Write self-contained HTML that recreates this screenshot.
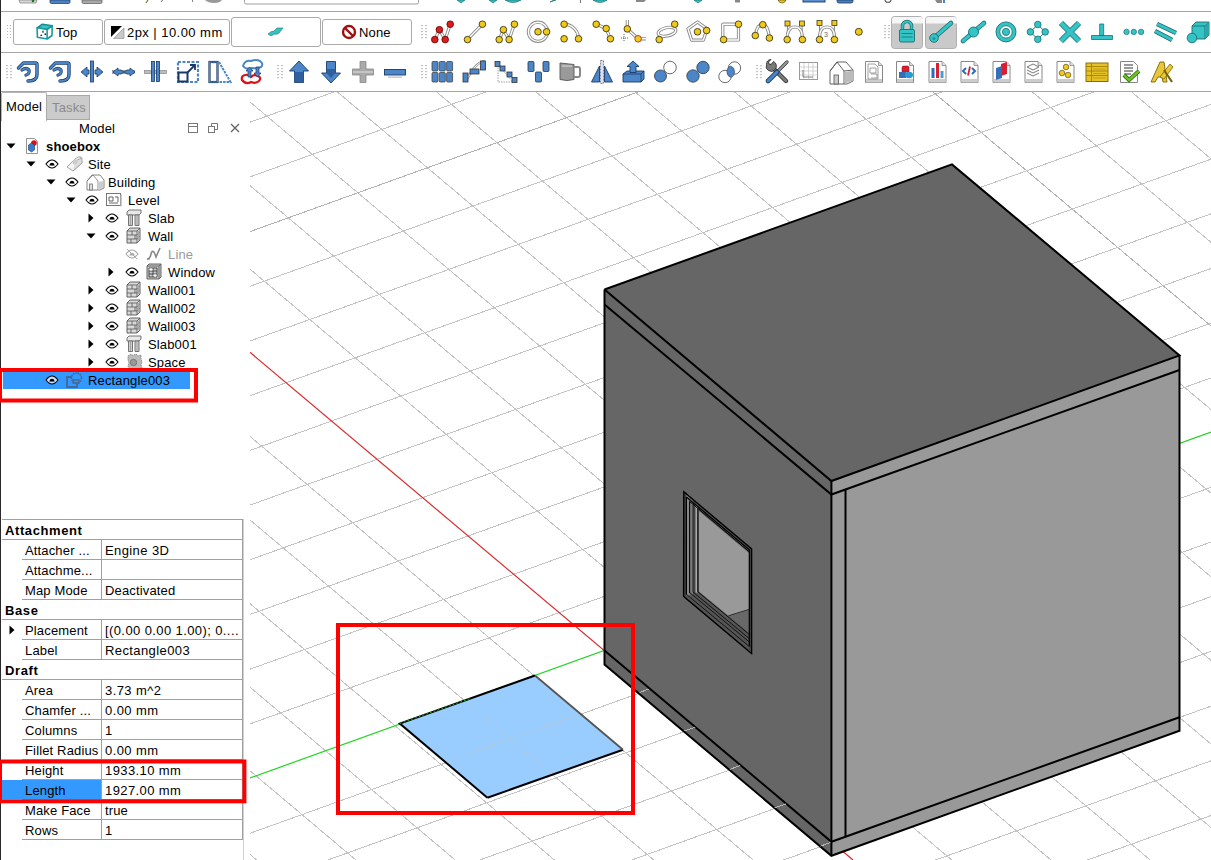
<!DOCTYPE html><html><head><meta charset="utf-8"><style>
html,body{margin:0;padding:0;width:1211px;height:860px;overflow:hidden;background:#fff;}
body{position:relative;font-family:"Liberation Sans",sans-serif;font-size:13px;color:#000;}
.a{position:absolute;}
.sep{position:absolute;left:0;width:1211px;height:1px;background:#a6a6a6;}
.btn{position:absolute;border:1px solid #a9a9a9;border-radius:3px;background:#fff;box-sizing:border-box;}
.t{position:absolute;white-space:nowrap;line-height:15px;letter-spacing:0.15px;}
.grip{position:absolute;width:6px;height:16px;background-image:radial-gradient(circle,#b8b8b8 0.8px,transparent 1px);background-size:3px 3px;}
</style></head><body><div class="sep" style="top:11px"></div><div class="sep" style="top:52px"></div><div class="sep" style="top:91px"></div>
<div class="a" style="left:0;top:0;width:1px;height:860px;background:#2a2a2a"></div>
<div class="grip" style="left:6px;top:24px"></div>
<div class="btn" style="left:13px;top:19px;width:90px;height:26px"></div>
<div class="t" style="left:56px;top:25px">Top</div>
<div class="btn" style="left:104px;top:19px;width:126px;height:26px"></div>
<div class="t" style="left:127px;top:25px;letter-spacing:0.45px">2px | 10.00 mm</div>
<div class="btn" style="left:231px;top:17px;width:90px;height:30px"></div>
<div class="btn" style="left:322px;top:19px;width:90px;height:26px"></div>
<div class="t" style="left:359px;top:25px">None</div>
<div class="a" style="left:1px;top:92px;width:46px;height:29px;border:1px solid #b5b5b5;border-bottom:none;border-radius:2px 2px 0 0;background:#fff;box-sizing:border-box"></div>
<div class="t" style="left:6px;top:99px">Model</div>
<div class="a" style="left:46px;top:95px;width:44px;height:25px;border:1px solid #a9a9a9;background:#cbcbcb;box-sizing:border-box"></div>
<div class="t" style="left:52px;top:100px;color:#8a8a8a">Tasks</div>
<div class="t" style="left:79px;top:121px">Model</div>
<div class="t" style="left:46px;top:139px;color:#000;font-weight:bold">shoebox</div>
<div class="t" style="left:88px;top:157px;color:#000;font-weight:normal">Site</div>
<div class="t" style="left:108px;top:175px;color:#000;font-weight:normal">Building</div>
<div class="t" style="left:128px;top:193px;color:#000;font-weight:normal">Level</div>
<div class="t" style="left:148px;top:211px;color:#000;font-weight:normal">Slab</div>
<div class="t" style="left:148px;top:229px;color:#000;font-weight:normal">Wall</div>
<div class="t" style="left:168px;top:247px;color:#9a9a9a;font-weight:normal">Line</div>
<div class="t" style="left:168px;top:265px;color:#000;font-weight:normal">Window</div>
<div class="t" style="left:148px;top:283px;color:#000;font-weight:normal">Wall001</div>
<div class="t" style="left:148px;top:301px;color:#000;font-weight:normal">Wall002</div>
<div class="t" style="left:148px;top:319px;color:#000;font-weight:normal">Wall003</div>
<div class="t" style="left:148px;top:337px;color:#000;font-weight:normal">Slab001</div>
<div class="t" style="left:148px;top:355px;color:#000;font-weight:normal">Space</div>
<div class="a" style="left:3px;top:372px;width:187px;height:17px;background:#3399ff"></div>
<div class="t" style="left:88px;top:373px;color:#000;font-weight:normal">Rectangle003</div>
<div class="a" style="left:2px;top:519px;width:241px;height:1px;background:#a0a0a0"></div>
<div class="a" style="left:242px;top:519px;width:1px;height:321px;background:#a0a0a0"></div>
<div class="a" style="left:243px;top:519px;width:1px;height:341px;background:#d0d0d0"></div>
<div class="t" style="left:5px;top:523px;font-weight:bold;letter-spacing:0.6px">Attachment</div>
<div class="a" style="left:2px;top:539px;width:240px;height:1px;background:#a0a0a0"></div>
<div class="t" style="left:25px;top:543px">Attacher ...</div>
<div class="t" style="left:105px;top:543px;letter-spacing:0.4px">Engine 3D</div>
<div class="a" style="left:22px;top:559px;width:220px;height:1px;background:#a0a0a0"></div>
<div class="a" style="left:101px;top:540px;width:1px;height:19px;background:#a0a0a0"></div>
<div class="t" style="left:25px;top:563px">Attachme...</div>
<div class="t" style="left:105px;top:563px;letter-spacing:0.15px"></div>
<div class="a" style="left:22px;top:579px;width:220px;height:1px;background:#a0a0a0"></div>
<div class="a" style="left:101px;top:560px;width:1px;height:19px;background:#a0a0a0"></div>
<div class="t" style="left:25px;top:583px">Map Mode</div>
<div class="t" style="left:105px;top:583px;letter-spacing:0.15px">Deactivated</div>
<div class="a" style="left:22px;top:599px;width:220px;height:1px;background:#a0a0a0"></div>
<div class="a" style="left:101px;top:580px;width:1px;height:19px;background:#a0a0a0"></div>
<div class="t" style="left:5px;top:603px;font-weight:bold;letter-spacing:0.6px">Base</div>
<div class="a" style="left:2px;top:619px;width:240px;height:1px;background:#a0a0a0"></div>
<div class="t" style="left:25px;top:623px">Placement</div>
<div class="t" style="left:105px;top:623px;letter-spacing:0.4px">[(0.00 0.00 1.00); 0....</div>
<div class="a" style="left:22px;top:639px;width:220px;height:1px;background:#a0a0a0"></div>
<div class="a" style="left:101px;top:620px;width:1px;height:19px;background:#a0a0a0"></div>
<div class="t" style="left:25px;top:643px">Label</div>
<div class="t" style="left:105px;top:643px;letter-spacing:0.4px">Rectangle003</div>
<div class="a" style="left:22px;top:659px;width:220px;height:1px;background:#a0a0a0"></div>
<div class="a" style="left:101px;top:640px;width:1px;height:19px;background:#a0a0a0"></div>
<div class="t" style="left:5px;top:663px;font-weight:bold;letter-spacing:0.6px">Draft</div>
<div class="a" style="left:2px;top:679px;width:240px;height:1px;background:#a0a0a0"></div>
<div class="t" style="left:25px;top:683px">Area</div>
<div class="t" style="left:105px;top:683px;letter-spacing:0.4px">3.73 m^2</div>
<div class="a" style="left:22px;top:699px;width:220px;height:1px;background:#a0a0a0"></div>
<div class="a" style="left:101px;top:680px;width:1px;height:19px;background:#a0a0a0"></div>
<div class="t" style="left:25px;top:703px">Chamfer ...</div>
<div class="t" style="left:105px;top:703px;letter-spacing:0.4px">0.00 mm</div>
<div class="a" style="left:22px;top:719px;width:220px;height:1px;background:#a0a0a0"></div>
<div class="a" style="left:101px;top:700px;width:1px;height:19px;background:#a0a0a0"></div>
<div class="t" style="left:25px;top:723px">Columns</div>
<div class="t" style="left:105px;top:723px;letter-spacing:0.4px">1</div>
<div class="a" style="left:22px;top:739px;width:220px;height:1px;background:#a0a0a0"></div>
<div class="a" style="left:101px;top:720px;width:1px;height:19px;background:#a0a0a0"></div>
<div class="t" style="left:25px;top:743px">Fillet Radius</div>
<div class="t" style="left:105px;top:743px;letter-spacing:0.4px">0.00 mm</div>
<div class="a" style="left:22px;top:759px;width:220px;height:1px;background:#a0a0a0"></div>
<div class="a" style="left:101px;top:740px;width:1px;height:19px;background:#a0a0a0"></div>
<div class="t" style="left:25px;top:763px">Height</div>
<div class="t" style="left:105px;top:763px;letter-spacing:0.4px">1933.10 mm</div>
<div class="a" style="left:22px;top:779px;width:220px;height:1px;background:#a0a0a0"></div>
<div class="a" style="left:101px;top:760px;width:1px;height:19px;background:#a0a0a0"></div>
<div class="a" style="left:2px;top:780px;width:99px;height:19px;background:#3399ff"></div>
<div class="t" style="left:25px;top:783px">Length</div>
<div class="t" style="left:105px;top:783px;letter-spacing:0.4px">1927.00 mm</div>
<div class="a" style="left:22px;top:799px;width:220px;height:1px;background:#a0a0a0"></div>
<div class="a" style="left:101px;top:780px;width:1px;height:19px;background:#a0a0a0"></div>
<div class="t" style="left:25px;top:803px">Make Face</div>
<div class="t" style="left:105px;top:803px;letter-spacing:0.15px">true</div>
<div class="a" style="left:22px;top:819px;width:220px;height:1px;background:#a0a0a0"></div>
<div class="a" style="left:101px;top:800px;width:1px;height:19px;background:#a0a0a0"></div>
<div class="t" style="left:25px;top:823px">Rows</div>
<div class="t" style="left:105px;top:823px;letter-spacing:0.4px">1</div>
<div class="a" style="left:22px;top:839px;width:220px;height:1px;background:#a0a0a0"></div>
<div class="a" style="left:101px;top:820px;width:1px;height:19px;background:#a0a0a0"></div>
<svg class="a" style="left:0;top:0" width="1211" height="92" viewBox="0 0 1211 92"><path d="M19,0 h18 l-1,3 h-16 z" fill="#d8d8d8" stroke="#888" stroke-width="0.8"/><circle cx="33" cy="1" r="1.3" fill="#1a7a1a"/><path d="M50,0 h20 v2 a1.5,1.5 0 0 1 -1.5,1.5 h-17 a1.5,1.5 0 0 1 -1.5,-1.5 z" fill="#4a7fc0" stroke="#24477a" stroke-width="0.8"/><path d="M82,0 h20 v2 a1.5,1.5 0 0 1 -1.5,1.5 h-17 a1.5,1.5 0 0 1 -1.5,-1.5 z" fill="#a8a8a8" stroke="#666" stroke-width="0.8"/><path d="M146,3 l2,-3" stroke="#7a7a20" stroke-width="1.2"/><path d="M161,2 q1,-2 2,-2" stroke="#777" stroke-width="1"/><rect x="192" y="0" width="1" height="2" fill="#888"/><path d="M205,0 h17 q-2,3 -8,3 q-6,0 -9,-3z" fill="#999"/><path d="M244.5,0 v2.5 a1.5,1.5 0 0 0 1.5,1.5 h171 a1.5,1.5 0 0 0 1.5,-1.5 v-2.5" fill="none" stroke="#a0a0a0" stroke-width="1"/><path d="M457,0 l4,3 l4,-3z" fill="#35c4c6" stroke="#1b6e70" stroke-width="0.7"/><path d="M489,0 l4,3 l4,-3z" fill="#35c4c6" stroke="#1b6e70" stroke-width="0.7"/><path d="M694,0 l4,3 l4,-3z" fill="#35c4c6" stroke="#1b6e70" stroke-width="0.7"/><path d="M505,0 h16 q-8,5 -16,0z" fill="#35c4c6" stroke="#1b6e70" stroke-width="0.7"/><path d="M593,0 h14 q-7,5 -14,0z" fill="#35c4c6" stroke="#1b6e70" stroke-width="0.7"/><path d="M550,2 l4,-2 h2 z" fill="#35c4c6" stroke="#1b6e70" stroke-width="0.7"/><rect x="580" y="0" width="1" height="3" fill="#777"/><path d="M636,0 h10 l-2,2 h-8z" fill="#888"/><rect x="735" y="0" width="5" height="2.5" fill="#888"/><path d="M778,0 h8 q-1,3 -4,3 q-3,0 -4,-3z" fill="#f2c81a" stroke="#3d3a10" stroke-width="0.6"/><rect x="803" y="-2" width="22" height="4" fill="#5b8fd0" stroke="#1a3a66" stroke-width="0.9"/><path d="M837,0 h16 v1 q0,2 -2,2 h-12 q-2,0 -2,-2z" fill="#4a7fc0" stroke="#1a3a66" stroke-width="0.8"/><path d="M885,0 q1,3 3,2 q2,1 3,-2" stroke="#555" fill="none" stroke-width="1.2"/><path d="M935,0 h7 v3 h-5z" fill="#888"/><rect x="943" y="0" width="2" height="3" fill="#4a7fc0"/><rect x="421" y="25" width="2" height="1.2" fill="#c4c4c4"/><rect x="425" y="25" width="2" height="1.2" fill="#c4c4c4"/><rect x="421" y="28" width="2" height="1.2" fill="#c4c4c4"/><rect x="425" y="28" width="2" height="1.2" fill="#c4c4c4"/><rect x="421" y="31" width="2" height="1.2" fill="#c4c4c4"/><rect x="425" y="31" width="2" height="1.2" fill="#c4c4c4"/><rect x="421" y="34" width="2" height="1.2" fill="#c4c4c4"/><rect x="425" y="34" width="2" height="1.2" fill="#c4c4c4"/><rect x="421" y="37" width="2" height="1.2" fill="#c4c4c4"/><rect x="425" y="37" width="2" height="1.2" fill="#c4c4c4"/><path d="M434.8,39.6 L439.4,29.7 L445.2,39.6 L450.2,24.2" fill="none" stroke="#8a8a8a" stroke-width="3.2" stroke-linejoin="round"/><path d="M434.8,39.6 L439.4,29.7 L445.2,39.6 L450.2,24.2" fill="none" stroke="#fff" stroke-width="1.4" stroke-linejoin="round"/><circle cx="434.8" cy="39.6" r="3.3" fill="#d81e1e" stroke="#700" stroke-width="0.9"/><circle cx="439.4" cy="29.7" r="3.3" fill="#d81e1e" stroke="#700" stroke-width="0.9"/><circle cx="445.2" cy="39.6" r="3.3" fill="#d81e1e" stroke="#700" stroke-width="0.9"/><circle cx="450.2" cy="24.2" r="3.3" fill="#d81e1e" stroke="#700" stroke-width="0.9"/><path d="M467.5,39.6 L482.4,24.2" fill="none" stroke="#8a8a8a" stroke-width="3.2" stroke-linejoin="round"/><path d="M467.5,39.6 L482.4,24.2" fill="none" stroke="#fff" stroke-width="1.4" stroke-linejoin="round"/><circle cx="467.5" cy="39.6" r="3.3" fill="#f2c81a" stroke="#3d3a10" stroke-width="0.9"/><circle cx="482.4" cy="24.2" r="3.3" fill="#f2c81a" stroke="#3d3a10" stroke-width="0.9"/><path d="M499.2,39.6 L503.4,29.7 L509.1,39.6 L514.4,24.2" fill="none" stroke="#8a8a8a" stroke-width="3.2" stroke-linejoin="round"/><path d="M499.2,39.6 L503.4,29.7 L509.1,39.6 L514.4,24.2" fill="none" stroke="#fff" stroke-width="1.4" stroke-linejoin="round"/><circle cx="499.2" cy="39.6" r="3.3" fill="#f2c81a" stroke="#3d3a10" stroke-width="0.9"/><circle cx="503.4" cy="29.7" r="3.3" fill="#f2c81a" stroke="#3d3a10" stroke-width="0.9"/><circle cx="509.1" cy="39.6" r="3.3" fill="#f2c81a" stroke="#3d3a10" stroke-width="0.9"/><circle cx="514.4" cy="24.2" r="3.3" fill="#f2c81a" stroke="#3d3a10" stroke-width="0.9"/><circle cx="538" cy="31.8" r="9.6" fill="none" stroke="#8a8a8a" stroke-width="3.2"/><circle cx="538" cy="31.8" r="9.6" fill="none" stroke="#fff" stroke-width="1.4"/><circle cx="538" cy="31.8" r="3.3" fill="#f2c81a" stroke="#3d3a10" stroke-width="0.9"/><circle cx="546.6" cy="31.8" r="3.3" fill="#f2c81a" stroke="#3d3a10" stroke-width="0.9"/><path d="M564.1,24.2 A14.5,14.5 0 0 1 578.5,38.8" fill="none" stroke="#8a8a8a" stroke-width="3.2" stroke-linejoin="round"/><path d="M564.1,24.2 A14.5,14.5 0 0 1 578.5,38.8" fill="none" stroke="#fff" stroke-width="1.4" stroke-linejoin="round"/><circle cx="564.1" cy="24.2" r="3.3" fill="#f2c81a" stroke="#3d3a10" stroke-width="0.9"/><circle cx="564.1" cy="38.8" r="3.3" fill="#f2c81a" stroke="#3d3a10" stroke-width="0.9"/><circle cx="578.5" cy="38.8" r="3.3" fill="#f2c81a" stroke="#3d3a10" stroke-width="0.9"/><path d="M596.2,24.2 L606.2,28.5 L610.4,38.8" fill="none" stroke="#8a8a8a" stroke-width="3.2" stroke-linejoin="round"/><path d="M596.2,24.2 L606.2,28.5 L610.4,38.8" fill="none" stroke="#fff" stroke-width="1.4" stroke-linejoin="round"/><circle cx="596.2" cy="24.2" r="3.3" fill="#f2c81a" stroke="#3d3a10" stroke-width="0.9"/><circle cx="606.2" cy="28.5" r="3.3" fill="#f2c81a" stroke="#3d3a10" stroke-width="0.9"/><circle cx="610.4" cy="38.8" r="3.3" fill="#f2c81a" stroke="#3d3a10" stroke-width="0.9"/><path d="M627.3,20 L627.3,28.9 L638.1,38.8 L646,38.8" fill="none" stroke="#8a8a8a" stroke-width="3.2" stroke-linejoin="round"/><path d="M627.3,20 L627.3,28.9 L638.1,38.8 L646,38.8" fill="none" stroke="#fff" stroke-width="1.4" stroke-linejoin="round"/><path d="M624,34 v8 M621,38 h7" stroke="#333" stroke-width="0.8" stroke-dasharray="1,1"/><circle cx="627.3" cy="28.9" r="3.3" fill="#f2c81a" stroke="#3d3a10" stroke-width="0.9"/><circle cx="638.1" cy="38.8" r="3.3" fill="#f2c81a" stroke="#a33" stroke-width="0.9"/><ellipse cx="667" cy="31.8" rx="9" ry="4.2" transform="rotate(-12 667 31.8)" fill="none" stroke="#8a8a8a" stroke-width="3.2"/><ellipse cx="667" cy="31.8" rx="9" ry="4.2" transform="rotate(-12 667 31.8)" fill="none" stroke="#fff" stroke-width="1.4"/><circle cx="659.2" cy="39.6" r="3.3" fill="#f2c81a" stroke="#3d3a10" stroke-width="0.9"/><circle cx="674.7" cy="24.2" r="3.3" fill="#f2c81a" stroke="#3d3a10" stroke-width="0.9"/><path d="M697.5,22.0 L707.0,28.9 L703.4,40.1 L691.6,40.1 L688.0,28.9 Z" fill="none" stroke="#8a8a8a" stroke-width="3.2" stroke-linejoin="round"/><path d="M697.5,22.0 L707.0,28.9 L703.4,40.1 L691.6,40.1 L688.0,28.9 Z" fill="none" stroke="#fff" stroke-width="1.4" stroke-linejoin="round"/><circle cx="697.5" cy="31.8" r="3.3" fill="#f2c81a" stroke="#3d3a10" stroke-width="0.9"/><circle cx="706.6" cy="30.5" r="3.3" fill="#f2c81a" stroke="#3d3a10" stroke-width="0.9"/><path d="M722.8,24.2 H738.5 V40 H722.8 Z" fill="none" stroke="#8a8a8a" stroke-width="3.2" stroke-linejoin="round"/><path d="M722.8,24.2 H738.5 V40 H722.8 Z" fill="none" stroke="#fff" stroke-width="1.4" stroke-linejoin="round"/><circle cx="738.5" cy="24.2" r="3.3" fill="#f2c81a" stroke="#3d3a10" stroke-width="0.9"/><circle cx="723.6" cy="39.6" r="3.3" fill="#f2c81a" stroke="#3d3a10" stroke-width="0.9"/><path d="M755.3,35.5 Q757,24 762.8,24.7 Q768,25 769.4,38" fill="none" stroke="#8a8a8a" stroke-width="3.2" stroke-linejoin="round"/><path d="M755.3,35.5 Q757,24 762.8,24.7 Q768,25 769.4,38" fill="none" stroke="#fff" stroke-width="1.4" stroke-linejoin="round"/><circle cx="762.8" cy="24.7" r="3.3" fill="#f2c81a" stroke="#3d3a10" stroke-width="0.9"/><circle cx="755.3" cy="35.5" r="3.3" fill="#f2c81a" stroke="#3d3a10" stroke-width="0.9"/><circle cx="769.4" cy="38" r="3.3" fill="#f2c81a" stroke="#3d3a10" stroke-width="0.9"/><path d="M787.5,23.6 L787.2,39.6 M802,23.6 L802.4,39.6" stroke="#888" stroke-width="1"/><path d="M787.2,39.6 Q787,27 795,27 Q802.5,27 802.4,39.6" fill="none" stroke="#8a8a8a" stroke-width="3.2" stroke-linejoin="round"/><path d="M787.2,39.6 Q787,27 795,27 Q802.5,27 802.4,39.6" fill="none" stroke="#fff" stroke-width="1.4" stroke-linejoin="round"/><rect x="785.0" y="21" width="5" height="5" fill="#f2c81a" stroke="#3d3a10" stroke-width="0.8"/><rect x="799.5" y="21" width="5" height="5" fill="#f2c81a" stroke="#3d3a10" stroke-width="0.8"/><circle cx="787.2" cy="39.6" r="3.3" fill="#f2c81a" stroke="#3d3a10" stroke-width="0.9"/><circle cx="802.4" cy="39.6" r="3.3" fill="#f2c81a" stroke="#3d3a10" stroke-width="0.9"/><path d="M819.5,23.1 L819.5,39.6 M834.4,23.1 L834.4,39.6" stroke="#888" stroke-width="1"/><path d="M819.5,39.6 Q819,27 827,27 Q835,27 834.4,39.6" fill="none" stroke="#8a8a8a" stroke-width="3.2" stroke-linejoin="round"/><path d="M819.5,39.6 Q819,27 827,27 Q835,27 834.4,39.6" fill="none" stroke="#fff" stroke-width="1.4" stroke-linejoin="round"/><text x="824" y="37" font-size="7" fill="#666" font-family="Liberation Sans">3</text><rect x="817.0" y="20.5" width="5" height="5" fill="#f2c81a" stroke="#3d3a10" stroke-width="0.8"/><rect x="831.9" y="20.5" width="5" height="5" fill="#f2c81a" stroke="#3d3a10" stroke-width="0.8"/><circle cx="819.5" cy="39.6" r="3.3" fill="#f2c81a" stroke="#3d3a10" stroke-width="0.9"/><circle cx="834.4" cy="39.6" r="3.3" fill="#f2c81a" stroke="#3d3a10" stroke-width="0.9"/><circle cx="858.8" cy="31.8" r="3.5" fill="#f2c81a" stroke="#3d3a10" stroke-width="0.9"/><rect x="884" y="25" width="2" height="1.2" fill="#c4c4c4"/><rect x="888" y="25" width="2" height="1.2" fill="#c4c4c4"/><rect x="884" y="28" width="2" height="1.2" fill="#c4c4c4"/><rect x="888" y="28" width="2" height="1.2" fill="#c4c4c4"/><rect x="884" y="31" width="2" height="1.2" fill="#c4c4c4"/><rect x="888" y="31" width="2" height="1.2" fill="#c4c4c4"/><rect x="884" y="34" width="2" height="1.2" fill="#c4c4c4"/><rect x="888" y="34" width="2" height="1.2" fill="#c4c4c4"/><rect x="884" y="37" width="2" height="1.2" fill="#c4c4c4"/><rect x="888" y="37" width="2" height="1.2" fill="#c4c4c4"/><rect x="891.5" y="16.5" width="31" height="32" rx="3" fill="#c9c9c9" stroke="#b0b0b0" stroke-width="1"/><path d="M892,23.5 V19.5 a2.5,2.5 0 0 1 2.5,-2.5 h26 a2.5,2.5 0 0 1 2.5,2.5 V23.5 Z" fill="#f6f6f6"/><rect x="925.5" y="16.5" width="31" height="32" rx="3" fill="#c9c9c9" stroke="#b0b0b0" stroke-width="1"/><path d="M926,23.5 V19.5 a2.5,2.5 0 0 1 2.5,-2.5 h26 a2.5,2.5 0 0 1 2.5,2.5 V23.5 Z" fill="#f6f6f6"/><path d="M902.5,30 v-4 a4.5,4.5 0 0 1 9,0 v4" fill="none" stroke="#1b6e70" stroke-width="3.4"/><path d="M902.5,30 v-4 a4.5,4.5 0 0 1 9,0 v4" fill="none" stroke="#35c4c6" stroke-width="2"/><rect x="899.5" y="29.5" width="15" height="12.5" rx="1.5" fill="#35c4c6" stroke="#1b6e70" stroke-width="0.9"/><path d="M901.5,33.5 h11 M901.5,37 h11" stroke="#1b6e70" stroke-width="0.8"/><path d="M935,37 L951,23" stroke="#1b6e70" stroke-width="4.6" stroke-linecap="round"/><path d="M935,37 L951,23" stroke="#35c4c6" stroke-width="3" stroke-linecap="round"/><circle cx="934" cy="38" r="4.3" fill="#35c4c6" stroke="#1b6e70" stroke-width="0.9"/><circle cx="934" cy="38.5" r="1.6" fill="#1f9a9c"/><path d="M963,41 L984,23" stroke="#1b6e70" stroke-width="4.6" stroke-linecap="round"/><path d="M963,41 L984,23" stroke="#35c4c6" stroke-width="3" stroke-linecap="round"/><circle cx="973.5" cy="32" r="5" fill="#35c4c6" stroke="#1b6e70" stroke-width="0.9"/><circle cx="1006" cy="31.9" r="10" fill="#35c4c6" stroke="#1b6e70" stroke-width="0.9"/><circle cx="1006" cy="31.9" r="6.2" fill="#fff" stroke="#1b6e70" stroke-width="0.8"/><circle cx="1006" cy="31.9" r="3.6" fill="#35c4c6" stroke="#1b6e70" stroke-width="0.8"/><path d="M1037.8,24.5 L1045.2,31.9 L1037.8,39.3 L1030.4,31.9Z" fill="none" stroke="#1b6e70" stroke-width="1"/><circle cx="1037.8" cy="24.5" r="3.3" fill="#35c4c6" stroke="#1b6e70" stroke-width="0.8"/><circle cx="1045.2" cy="31.9" r="3.3" fill="#35c4c6" stroke="#1b6e70" stroke-width="0.8"/><circle cx="1037.8" cy="39.3" r="3.3" fill="#35c4c6" stroke="#1b6e70" stroke-width="0.8"/><circle cx="1030.3999999999999" cy="31.9" r="3.3" fill="#35c4c6" stroke="#1b6e70" stroke-width="0.8"/><path d="M1061,23 L1079,41 M1079,23 L1061,41" stroke="#1b6e70" stroke-width="6"/><path d="M1061,23 L1079,41 M1079,23 L1061,41" stroke="#35c4c6" stroke-width="4.4"/><path d="M1091.5,35.5 h21 v4 h-21z M1099.7,24 h4 v11.5 h-4z" fill="#35c4c6" stroke="#1b6e70" stroke-width="0.8"/><circle cx="1126.5" cy="31.9" r="2.7" fill="#35c4c6" stroke="#1b6e70" stroke-width="0.7"/><circle cx="1133.8" cy="31.9" r="2.7" fill="#35c4c6" stroke="#1b6e70" stroke-width="0.7"/><circle cx="1141.1" cy="31.9" r="2.7" fill="#35c4c6" stroke="#1b6e70" stroke-width="0.7"/><path d="M1157,24 L1176,33 M1155,31 L1172,40" stroke="#1b6e70" stroke-width="4.5"/><path d="M1157,24 L1176,33 M1155,31 L1172,40" stroke="#35c4c6" stroke-width="3"/><path d="M1192,26 l4,-4 h13 v13 l-4,4 h-13z" fill="#35c4c6" stroke="#1b6e70" stroke-width="0.9"/><path d="M1192,26 h13 v13 M1205,26 l4,-4" fill="none" stroke="#1b6e70" stroke-width="0.9"/><path d="M1205,26 l4,-4 v13 l-4,4z" fill="#2aa7a9"/><circle cx="1192" cy="38" r="4.8" fill="#35c4c6" stroke="#1b6e70" stroke-width="0.9"/><rect x="6" y="65" width="2" height="1.2" fill="#c4c4c4"/><rect x="10" y="65" width="2" height="1.2" fill="#c4c4c4"/><rect x="6" y="68" width="2" height="1.2" fill="#c4c4c4"/><rect x="10" y="68" width="2" height="1.2" fill="#c4c4c4"/><rect x="6" y="71" width="2" height="1.2" fill="#c4c4c4"/><rect x="10" y="71" width="2" height="1.2" fill="#c4c4c4"/><rect x="6" y="74" width="2" height="1.2" fill="#c4c4c4"/><rect x="10" y="74" width="2" height="1.2" fill="#c4c4c4"/><rect x="6" y="77" width="2" height="1.2" fill="#c4c4c4"/><rect x="10" y="77" width="2" height="1.2" fill="#c4c4c4"/><path d="M18.5,68 L23.5,63 H35.5 Q37,63 37,64.5 V74.5 Q37,81 28,81" fill="none" stroke="#1a3a66" stroke-width="3.4" stroke-linecap="round" stroke-linejoin="round"/><path d="M18.5,68 L23.5,63 H35.5 Q37,63 37,64.5 V74.5 Q37,81 28,81" fill="none" stroke="#4a86c8" stroke-width="2" stroke-linecap="round" stroke-linejoin="round"/><path d="M22,70 Q26,67 29,70 Q30,74 26,75" fill="none" stroke="#1a3a66" stroke-width="3.2" stroke-linecap="round"/><path d="M22,70 Q26,67 29,70 Q30,74 26,75" fill="none" stroke="#4a86c8" stroke-width="1.8" stroke-linecap="round"/><path d="M50.5,68 L55.5,63 H67.5 Q69,63 69,64.5 V74.5 Q69,81 60,81" fill="none" stroke="#1a3a66" stroke-width="3.4" stroke-linecap="round" stroke-linejoin="round"/><path d="M50.5,68 L55.5,63 H67.5 Q69,63 69,64.5 V74.5 Q69,81 60,81" fill="none" stroke="#4a86c8" stroke-width="2" stroke-linecap="round" stroke-linejoin="round"/><path d="M54,70 Q58,67 61,70 Q62,74 58,75" fill="none" stroke="#1a3a66" stroke-width="3.2" stroke-linecap="round"/><path d="M54,70 Q58,67 61,70 Q62,74 58,75" fill="none" stroke="#4a86c8" stroke-width="1.8" stroke-linecap="round"/><rect x="90.5" y="61" width="3" height="21" fill="#4a86c8" stroke="#1a3a66" stroke-width="0.8"/><path d="M81,72 l6,-5 v3 h2 v4 h-2 v3z M103,72 l-6,-5 v3 h-2 v4 h2 v3z" fill="#4a86c8" stroke="#1a3a66" stroke-width="0.8"/><rect x="112.5" y="70.5" width="22" height="3" fill="#bbb" stroke="#888" stroke-width="0.7"/><path d="M113,72 l5,-4 v2 h3 l3,2 l-3,2 h-3 v2z M135,72 l-5,-4 v2 h-3 l-3,2 l3,2 h3 v2z" fill="#4a86c8" stroke="#1a3a66" stroke-width="0.8"/><rect x="144.5" y="70.5" width="22" height="3" fill="#bbb" stroke="#888" stroke-width="0.7"/><rect x="151.5" y="61.5" width="3" height="20" fill="#4a86c8" stroke="#1a3a66" stroke-width="0.8"/><rect x="156.5" y="61.5" width="3" height="20" fill="#4a86c8" stroke="#1a3a66" stroke-width="0.8"/><rect x="178" y="62" width="20" height="20" fill="none" stroke="#4a86c8" stroke-width="2.2" stroke-dasharray="3,1.5"/><rect x="178.5" y="72.5" width="9" height="9" fill="#fff" stroke="#1a3a66" stroke-width="2"/><path d="M187,73 L195,65 M190,65 h5 v5" fill="none" stroke="#1a3a66" stroke-width="1.8"/><rect x="209.5" y="62" width="8" height="20" fill="#fff" stroke="#1a3a66" stroke-width="2.2"/><rect x="209.5" y="62" width="8" height="20" fill="none" stroke="#4a86c8" stroke-width="1"/><path d="M219,62 L230.5,82 H219" fill="none" stroke="#4a86c8" stroke-width="2" stroke-dasharray="2.5,1"/><path d="M242,80 q-1,-4 3,-5 q4,-1 6,2 q3,-3 7,-1 q4,2 1,5 q-3,3 -8,1 q-5,3 -9,-2z" fill="none" stroke="#d11" stroke-width="2.2"/><path d="M243,66 q2,-6 8,-5 q5,-2 9,0 q4,3 1,6 q-4,2 -9,1 q-6,2 -9,-2z" fill="none" stroke="#4a86c8" stroke-width="2"/><path d="M248,77 v-6 h-2 l3.5,-4 l3.5,4 h-2 v6z M256,67 v6 h-2 l3.5,4 l3.5,-4 h-2 v-6z" fill="#4a86c8" stroke="#1a3a66" stroke-width="0.7"/><rect x="277" y="65" width="2" height="1.2" fill="#c4c4c4"/><rect x="281" y="65" width="2" height="1.2" fill="#c4c4c4"/><rect x="277" y="68" width="2" height="1.2" fill="#c4c4c4"/><rect x="281" y="68" width="2" height="1.2" fill="#c4c4c4"/><rect x="277" y="71" width="2" height="1.2" fill="#c4c4c4"/><rect x="281" y="71" width="2" height="1.2" fill="#c4c4c4"/><rect x="277" y="74" width="2" height="1.2" fill="#c4c4c4"/><rect x="281" y="74" width="2" height="1.2" fill="#c4c4c4"/><rect x="277" y="77" width="2" height="1.2" fill="#c4c4c4"/><rect x="281" y="77" width="2" height="1.2" fill="#c4c4c4"/><path d="M299,61 l9.5,10 h-5 v11.5 h-9 v-11.5 h-5z" fill="#4a86c8" stroke="#1a3a66" stroke-width="0.9"/><path d="M294.5,72 h9 v10.5 h-9z" fill="#2f5f9e"/><path d="M331,83 l9.5,-10 h-5 v-11.5 h-9 v11.5 h-5z" fill="#4a86c8" stroke="#1a3a66" stroke-width="0.9"/><path d="M326.5,69 h9 v4 l-4.5,5 l-4.5,-5z" fill="#2f5f9e"/><path d="M360,61.5 h6 v7.5 h7.5 v6 h-7.5 v7.5 h-6 v-7.5 h-7.5 v-6 h7.5z" fill="#aaa" stroke="#888" stroke-width="0.8"/><path d="M353,72 h20" stroke="#ddd" stroke-width="1"/><rect x="384.5" y="69.5" width="21" height="5.5" fill="#4a86c8" stroke="#1a3a66" stroke-width="0.9"/><rect x="388" y="76.5" width="14" height="1.2" fill="#bbb"/><rect x="421" y="65" width="2" height="1.2" fill="#c4c4c4"/><rect x="425" y="65" width="2" height="1.2" fill="#c4c4c4"/><rect x="421" y="68" width="2" height="1.2" fill="#c4c4c4"/><rect x="425" y="68" width="2" height="1.2" fill="#c4c4c4"/><rect x="421" y="71" width="2" height="1.2" fill="#c4c4c4"/><rect x="425" y="71" width="2" height="1.2" fill="#c4c4c4"/><rect x="421" y="74" width="2" height="1.2" fill="#c4c4c4"/><rect x="425" y="74" width="2" height="1.2" fill="#c4c4c4"/><rect x="421" y="77" width="2" height="1.2" fill="#c4c4c4"/><rect x="425" y="77" width="2" height="1.2" fill="#c4c4c4"/><rect x="432.0" y="61.5" width="6" height="9.5" rx="1" fill="#4a86c8" stroke="#444" stroke-width="0.8"/><rect x="432.0" y="72.5" width="6" height="9.5" rx="1" fill="#4a86c8" stroke="#444" stroke-width="0.8"/><rect x="439.3" y="61.5" width="6" height="9.5" rx="1" fill="#4a86c8" stroke="#444" stroke-width="0.8"/><rect x="439.3" y="72.5" width="6" height="9.5" rx="1" fill="#4a86c8" stroke="#444" stroke-width="0.8"/><rect x="446.6" y="61.5" width="6" height="9.5" rx="1" fill="#4a86c8" stroke="#444" stroke-width="0.8"/><rect x="446.6" y="72.5" width="6" height="9.5" rx="1" fill="#4a86c8" stroke="#444" stroke-width="0.8"/><path d="M467,79 q6,-10 8,-12 q4,-5 10,-6" fill="none" stroke="#999" stroke-width="2.5"/><path d="M467,79 q6,-10 8,-12 q4,-5 10,-6" fill="none" stroke="#fff" stroke-width="1"/><rect x="463" y="73" width="5" height="9" fill="#4a86c8" stroke="#333" stroke-width="0.8"/><rect x="470" y="69" width="9" height="5" fill="#4a86c8" stroke="#333" stroke-width="0.8"/><rect x="480.5" y="61" width="5" height="9" fill="#4a86c8" stroke="#333" stroke-width="0.8"/><path d="M498,65 v17 h15 M498,65 l15,17 M498,65 l10,9" fill="none" stroke="#888" stroke-width="0.8" stroke-dasharray="1.5,1"/><rect x="495" y="61.5" width="5" height="5" fill="#4a86c8" stroke="#333" stroke-width="0.8"/><rect x="500" y="66" width="5" height="5" fill="#4a86c8" stroke="#333" stroke-width="0.8"/><rect x="507" y="72" width="5" height="5" fill="#4a86c8" stroke="#333" stroke-width="0.8"/><rect x="512" y="77.5" width="5" height="5" fill="#4a86c8" stroke="#333" stroke-width="0.8"/><rect x="528" y="61.5" width="6" height="10" rx="1" fill="#4a86c8" stroke="#333" stroke-width="0.8"/><rect x="543" y="61.5" width="6" height="10" rx="1" fill="#4a86c8" stroke="#333" stroke-width="0.8"/><rect x="535.5" y="72" width="6" height="10" rx="1" fill="#4a86c8" stroke="#333" stroke-width="0.8"/><path d="M560,63 l14,1.5 v15 q-7,2 -14,0z" fill="#9a9a9a" stroke="#555" stroke-width="0.9"/><path d="M574,67 h4 q2,0 2,2 v6 q0,2 -2,2 h-4" fill="none" stroke="#888" stroke-width="2"/><path d="M562,66 h10" stroke="#ddd" stroke-width="1"/><path d="M591.5,82 L599.5,66 V82z M612.5,82 L604.5,66 V82z" fill="#4a86c8" stroke="#1a3a66" stroke-width="0.9"/><rect x="600.5" y="60.5" width="3" height="23" fill="#dde" stroke="#446" stroke-width="0.6" stroke-dasharray="2,1"/><path d="M623,74 l4,-3 h17 v8 l-3,3 h-18z" fill="#4a86c8" stroke="#1a3a66" stroke-width="0.9"/><path d="M623,74 h18 v8 M641,74 l3,-3" fill="none" stroke="#1a3a66" stroke-width="0.8"/><path d="M633,61 l6,5.5 h-3 v6 h-6 v-6 h-3z" fill="#4a86c8" stroke="#1a3a66" stroke-width="0.9"/><circle cx="660.5" cy="76" r="6" fill="#4a86c8" stroke="#333" stroke-width="0.8"/><circle cx="670" cy="67.5" r="6.3" fill="#fff" stroke="#444" stroke-width="0.8"/><circle cx="693" cy="76" r="6.2" fill="#4a86c8" stroke="#333" stroke-width="0.8"/><circle cx="703" cy="67.5" r="6.2" fill="#4a86c8" stroke="#333" stroke-width="0.8"/><circle cx="693" cy="76" r="5.4" fill="#4a86c8"/><circle cx="725" cy="76.5" r="6.2" fill="#fff" stroke="#444" stroke-width="0.8"/><circle cx="734.5" cy="68" r="6.2" fill="none" stroke="#444" stroke-width="0.8"/><path d="M729.5,72.5 a6.2,6.2 0 0 1 1.5,-3 a6.2,6.2 0 0 1 -1,7.6 a6.2,6.2 0 0 1 -0.5,-4.6z" fill="#4a86c8"/><path d="M730.5,66 a6.2,6.2 0 0 1 0.5,11.5 a6.2,6.2 0 0 1 -0.5,-11.5z" fill="#4a86c8" stroke="#444" stroke-width="0.6"/><rect x="756" y="65" width="2" height="1.2" fill="#c4c4c4"/><rect x="760" y="65" width="2" height="1.2" fill="#c4c4c4"/><rect x="756" y="68" width="2" height="1.2" fill="#c4c4c4"/><rect x="760" y="68" width="2" height="1.2" fill="#c4c4c4"/><rect x="756" y="71" width="2" height="1.2" fill="#c4c4c4"/><rect x="760" y="71" width="2" height="1.2" fill="#c4c4c4"/><rect x="756" y="74" width="2" height="1.2" fill="#c4c4c4"/><rect x="760" y="74" width="2" height="1.2" fill="#c4c4c4"/><rect x="756" y="77" width="2" height="1.2" fill="#c4c4c4"/><rect x="760" y="77" width="2" height="1.2" fill="#c4c4c4"/><path d="M771,66 L786,81" stroke="#333" stroke-width="4.4" stroke-linecap="round"/><path d="M771,66 L786,81" stroke="#7a7a7a" stroke-width="2.8" stroke-linecap="round"/><path d="M766.5,64.5 a5,5 0 0 0 8.5,5 a5,5 0 0 0 -1.5,-8 l-2.5,3 l-2,-0.5 l-0.5,-2 l2.5,-2.5 a5,5 0 0 0 -4.5,5z" fill="#7a7a7a" stroke="#333" stroke-width="0.9"/><path d="M787,62 L777,72" stroke="#333" stroke-width="3.2" stroke-linecap="round"/><path d="M787,62 L777,72" stroke="#999" stroke-width="1.8" stroke-linecap="round"/><path d="M777,72 L768,81" stroke="#1a3a66" stroke-width="4.6" stroke-linecap="round"/><path d="M777,72 L768,81" stroke="#4a86c8" stroke-width="3" stroke-linecap="round"/><rect x="799.5" y="62.5" width="18" height="17" fill="#fff" stroke="#999" stroke-width="1"/><path d="M799.5,67 h18 M799.5,71 h18 M799.5,75 h18 M804,62.5 v17 M808.5,62.5 v17 M813,62.5 v17" stroke="#bbb" stroke-width="0.6"/><path d="M803,70 v7 h10" fill="none" stroke="#666" stroke-width="0.8"/><path d="M830,71 l7,-9 h9 l7,8 v11 l-6,3 h-17z" fill="#fff" stroke="#555" stroke-width="0.9"/><path d="M830,71 l7,-9 l7,9 v13 M844,71 l9,-1" fill="none" stroke="#555" stroke-width="0.9"/><path d="M845,72 l8,-1.5 v10 l-8,3z" fill="#bbb"/><rect x="834" y="75" width="4.5" height="9" fill="#ccc" stroke="#555" stroke-width="0.8"/><path d="M865.5,61.5 h13 l4,4 v17 h-17z" fill="#fff" stroke="#888" stroke-width="1"/><path d="M878.5,61.5 v4 h4" fill="#ddd" stroke="#888" stroke-width="0.8"/><rect x="866" y="79" width="16" height="3.5" fill="#ccc"/><path d="M868,64 h7 l3,3 v12 h-10z M870,68 h6 v5 h-6z M871,74 h6 v4 h-6" fill="none" stroke="#888" stroke-width="0.8"/><path d="M896.5,61.5 h13 l4,4 v17 h-17z" fill="#fff" stroke="#888" stroke-width="1"/><path d="M909.5,61.5 v4 h4" fill="#ddd" stroke="#888" stroke-width="0.8"/><rect x="897" y="79" width="16" height="3.5" fill="#ccc"/><path d="M903,66 h5 l1,1 v5 h-7 v-5z" fill="#d62030" stroke="#902" stroke-width="0.5"/><rect x="899" y="72" width="7" height="6" fill="#3470b8"/><ellipse cx="909" cy="75" rx="4" ry="3.2" fill="#2a9ad6"/><path d="M929.0,61.5 h13 l4,4 v17 h-17z" fill="#fff" stroke="#888" stroke-width="1"/><path d="M942.0,61.5 v4 h4" fill="#ddd" stroke="#888" stroke-width="0.8"/><rect x="929.5" y="79" width="16" height="3.5" fill="#ccc"/><rect x="931.5" y="68" width="3" height="10" fill="#2a6cc0"/><rect x="936" y="63" width="3" height="15" fill="#d82030"/><rect x="940.5" y="71" width="3" height="7" fill="#3aa2d8"/><path d="M961.0,61.5 h13 l4,4 v17 h-17z" fill="#fff" stroke="#888" stroke-width="1"/><path d="M974.0,61.5 v4 h4" fill="#ddd" stroke="#888" stroke-width="0.8"/><rect x="961.5" y="79" width="16" height="3.5" fill="#ccc"/><path d="M966,68 l-3,3 l3,3 M972,68 l3,3 l-3,3" fill="none" stroke="#2a6cc0" stroke-width="2"/><path d="M970,66.5 l-2,9" stroke="#d82030" stroke-width="1.8"/><path d="M993.0,61.5 h13 l4,4 v17 h-17z" fill="#fff" stroke="#888" stroke-width="1"/><path d="M1006.0,61.5 v4 h4" fill="#ddd" stroke="#888" stroke-width="0.8"/><rect x="993.5" y="79" width="16" height="3.5" fill="#ccc"/><path d="M1001,64 l6,-2 v12 l-6,2z" fill="#d62030"/><path d="M996,68 l6,-2 v12 l-6,2z" fill="#3470b8"/><path d="M1025.0,61.5 h13 l4,4 v17 h-17z" fill="#fff" stroke="#888" stroke-width="1"/><path d="M1038.0,61.5 v4 h4" fill="#ddd" stroke="#888" stroke-width="0.8"/><rect x="1025.5" y="79" width="16" height="3.5" fill="#ccc"/><path d="M1027,67 l6,-3 l6,3 l-6,3z M1027,70 l6,3 l6,-3 M1027,73 l6,3 l6,-3" fill="none" stroke="#777" stroke-width="1"/><path d="M1057.0,61.5 h13 l4,4 v17 h-17z" fill="#fff" stroke="#888" stroke-width="1"/><path d="M1070.0,61.5 v4 h4" fill="#ddd" stroke="#888" stroke-width="0.8"/><rect x="1057.5" y="79" width="16" height="3.5" fill="#ccc"/><circle cx="1066" cy="67" r="2.8" fill="#f2c81a" stroke="#3d3a10" stroke-width="0.6"/><circle cx="1062" cy="73" r="2.8" fill="#f2c81a" stroke="#3d3a10" stroke-width="0.6"/><circle cx="1068" cy="75" r="2.8" fill="#f2c81a" stroke="#3d3a10" stroke-width="0.6"/><rect x="1086" y="63" width="22" height="18.5" fill="#e6c229" stroke="#8a7000" stroke-width="1"/><path d="M1086,66.5 h22 M1086,71 h22 M1086,75.5 h22 M1091.5,63 v18.5" stroke="#9a7a00" stroke-width="0.8"/><path d="M1093,69 h13 M1093,73.5 h13 M1093,78 h13" stroke="#c89a10" stroke-width="1"/><path d="M1120.5,61.5 h13 l4,4 v17 h-17z" fill="#fff" stroke="#888" stroke-width="1"/><path d="M1124,65 h9 M1124,68 h9 M1124,71 h9 M1124,74 h7" stroke="#333" stroke-width="1"/><path d="M1124,75 l5,5 l10,-9" fill="none" stroke="#2f6a10" stroke-width="4"/><path d="M1124,75 l5,5 l10,-9" fill="none" stroke="#6cc02a" stroke-width="2.4"/><path d="M1151,82 l9,-20 h4 l3,20 h-4 l-1,-5 h-4 l-3,5z" fill="#e8c83a" stroke="#7a6400" stroke-width="0.9"/><path d="M1160,77 l10,-13 l3,3 l-9,12z" fill="#e8c83a" stroke="#7a6400" stroke-width="0.8"/><path d="M1164,70 l8,12" stroke="#7a6400" stroke-width="2.2"/></svg>
<svg class="a" style="left:0;top:0" width="250" height="860" viewBox="0 0 250 860"><path d="M6.5,143.5 h9 l-4.5,5z" fill="#000"/><path d="M26.5,138.5 h8 l3,3 v12 h-11z" fill="#fff" stroke="#888" stroke-width="0.9"/><circle cx="34" cy="143" r="2.8" fill="#d11"/><path d="M28.5,145 l3,-2 l3,2 v5 l-3,2 l-3,-2z" fill="#3a7bc8" stroke="#1a3a66" stroke-width="0.6"/><path d="M26.5,161.5 h9 l-4.5,5z" fill="#000"/><path d="M46,164 q6,-8 12,0 q-6,8 -12,0z" fill="#fff" stroke="#000" stroke-width="1.1"/><path d="M49.7,165 a2.3,2.3 0 0 1 4.6,0z" fill="#000"/><path d="M49.5,165.2 h5" stroke="#000" stroke-width="0.8"/><path d="M67,167 l8,-8 q3,-3 6,-2 l1,6 l-9,8z" fill="#f4f4f4" stroke="#999" stroke-width="0.9"/><path d="M75,161 l7,-3 v5 l-9,8" fill="#ddd" stroke="#999" stroke-width="0.8"/><circle cx="75" cy="162" r="2.5" fill="#ccc"/><path d="M46.5,179.5 h9 l-4.5,5z" fill="#000"/><path d="M66,182 q6,-8 12,0 q-6,8 -12,0z" fill="#fff" stroke="#000" stroke-width="1.1"/><path d="M69.7,183 a2.3,2.3 0 0 1 4.6,0z" fill="#000"/><path d="M69.5,183.2 h5" stroke="#000" stroke-width="0.8"/><path d="M87,181 l5,-6 h8 l4,5 v8 l-4,2 h-13z" fill="#fff" stroke="#777" stroke-width="0.9"/><path d="M87,181 l6,-6 l5,6 v9" fill="none" stroke="#777" stroke-width="0.8"/><path d="M98,182 l5,-1 v7 l-5,2z" fill="#ccc"/><rect x="89.5" y="184" width="3" height="6" fill="#ddd" stroke="#666" stroke-width="0.7"/><path d="M66.5,197.5 h9 l-4.5,5z" fill="#000"/><path d="M86,200 q6,-8 12,0 q-6,8 -12,0z" fill="#fff" stroke="#000" stroke-width="1.1"/><path d="M89.7,201 a2.3,2.3 0 0 1 4.6,0z" fill="#000"/><path d="M89.5,201.2 h5" stroke="#000" stroke-width="0.8"/><rect x="106.5" y="193.5" width="14" height="12" fill="#fff" stroke="#777" stroke-width="1"/><path d="M120.5,195 l1.5,-1 v12 l-1.5,1" fill="#ccc"/><path d="M109,197 h4 v4 h-4z M115,197 h3 v5 M109,203 h9" fill="none" stroke="#555" stroke-width="0.9"/><path d="M88.5,213.5 v9 l5,-4.5z" fill="#000"/><path d="M106,218 q6,-8 12,0 q-6,8 -12,0z" fill="#fff" stroke="#000" stroke-width="1.1"/><path d="M109.7,219 a2.3,2.3 0 0 1 4.6,0z" fill="#000"/><path d="M109.5,219.2 h5" stroke="#000" stroke-width="0.8"/><path d="M127,212 l2,-2 h12 v3 l-2,2 h-12z" fill="#e8e8e8" stroke="#666" stroke-width="0.9"/><path d="M128.5,215 h4 v10.5 h-4z M135,215 h4 v10.5 h-4z" fill="#cfcfcf" stroke="#666" stroke-width="0.9"/><path d="M130.5,215 v10 M137,215 v10" stroke="#999" stroke-width="0.8"/><path d="M86.5,233.5 h9 l-4.5,5z" fill="#000"/><path d="M106,236 q6,-8 12,0 q-6,8 -12,0z" fill="#fff" stroke="#000" stroke-width="1.1"/><path d="M109.7,237 a2.3,2.3 0 0 1 4.6,0z" fill="#000"/><path d="M109.5,237.2 h5" stroke="#000" stroke-width="0.8"/><path d="M127,231 l3,-3 h10 v12 l-3,3 h-10z" fill="#d8d8d8" stroke="#555" stroke-width="0.9"/><path d="M127,231 h10 v12 M127,235 h10 l3,-3 M127,239 h10 l3,-3 M137,231 l3,-3 M132,231 v4 M135,235 v4 M131,239 v4" fill="none" stroke="#555" stroke-width="0.8"/><path d="M137.5,232 l2,-2 v9 l-2,2z" fill="#aaa"/><path d="M126,254 q6,-8 12,0 q-6,8 -12,0z" fill="#fff" stroke="#aaa" stroke-width="1.1"/><path d="M129.7,255 a2.3,2.3 0 0 1 4.6,0z" fill="#aaa"/><path d="M129.5,255.2 h5" stroke="#aaa" stroke-width="0.8"/><path d="M127,249 l10,10" stroke="#aaa" stroke-width="1"/><path d="M147,259 q3,0 4,-5 q1,-4 3,-2 q1,2 2,5 l4,-9" fill="none" stroke="#888" stroke-width="1.6"/><path d="M147,259 h3" stroke="#888" stroke-width="1"/><path d="M108.5,267.5 v9 l5,-4.5z" fill="#000"/><path d="M126,272 q6,-8 12,0 q-6,8 -12,0z" fill="#fff" stroke="#000" stroke-width="1.1"/><path d="M129.7,273 a2.3,2.3 0 0 1 4.6,0z" fill="#000"/><path d="M129.5,273.2 h5" stroke="#000" stroke-width="0.8"/><path d="M147,266 l2,-2 h12 v13 l-2,2 h-12z" fill="#c8c8c8" stroke="#555" stroke-width="0.9"/><path d="M147,266 h12 v13 M159,266 l2,-2" fill="none" stroke="#555" stroke-width="0.8"/><path d="M149,268 h8 v9 h-8z M153,268 v9 M149,271 h8 M149,274 h8" fill="none" stroke="#333" stroke-width="0.8"/><path d="M149.5,268.5 h3 v2 h-3z M153.5,274.5 h3 v2 h-3z" fill="#fff"/><path d="M88.5,285.5 v9 l5,-4.5z" fill="#000"/><path d="M106,290 q6,-8 12,0 q-6,8 -12,0z" fill="#fff" stroke="#000" stroke-width="1.1"/><path d="M109.7,291 a2.3,2.3 0 0 1 4.6,0z" fill="#000"/><path d="M109.5,291.2 h5" stroke="#000" stroke-width="0.8"/><path d="M127,285 l3,-3 h10 v12 l-3,3 h-10z" fill="#d8d8d8" stroke="#555" stroke-width="0.9"/><path d="M127,285 h10 v12 M127,289 h10 l3,-3 M127,293 h10 l3,-3 M137,285 l3,-3 M132,285 v4 M135,289 v4 M131,293 v4" fill="none" stroke="#555" stroke-width="0.8"/><path d="M137.5,286 l2,-2 v9 l-2,2z" fill="#aaa"/><path d="M88.5,303.5 v9 l5,-4.5z" fill="#000"/><path d="M106,308 q6,-8 12,0 q-6,8 -12,0z" fill="#fff" stroke="#000" stroke-width="1.1"/><path d="M109.7,309 a2.3,2.3 0 0 1 4.6,0z" fill="#000"/><path d="M109.5,309.2 h5" stroke="#000" stroke-width="0.8"/><path d="M127,303 l3,-3 h10 v12 l-3,3 h-10z" fill="#d8d8d8" stroke="#555" stroke-width="0.9"/><path d="M127,303 h10 v12 M127,307 h10 l3,-3 M127,311 h10 l3,-3 M137,303 l3,-3 M132,303 v4 M135,307 v4 M131,311 v4" fill="none" stroke="#555" stroke-width="0.8"/><path d="M137.5,304 l2,-2 v9 l-2,2z" fill="#aaa"/><path d="M88.5,321.5 v9 l5,-4.5z" fill="#000"/><path d="M106,326 q6,-8 12,0 q-6,8 -12,0z" fill="#fff" stroke="#000" stroke-width="1.1"/><path d="M109.7,327 a2.3,2.3 0 0 1 4.6,0z" fill="#000"/><path d="M109.5,327.2 h5" stroke="#000" stroke-width="0.8"/><path d="M127,321 l3,-3 h10 v12 l-3,3 h-10z" fill="#d8d8d8" stroke="#555" stroke-width="0.9"/><path d="M127,321 h10 v12 M127,325 h10 l3,-3 M127,329 h10 l3,-3 M137,321 l3,-3 M132,321 v4 M135,325 v4 M131,329 v4" fill="none" stroke="#555" stroke-width="0.8"/><path d="M137.5,322 l2,-2 v9 l-2,2z" fill="#aaa"/><path d="M88.5,339.5 v9 l5,-4.5z" fill="#000"/><path d="M106,344 q6,-8 12,0 q-6,8 -12,0z" fill="#fff" stroke="#000" stroke-width="1.1"/><path d="M109.7,345 a2.3,2.3 0 0 1 4.6,0z" fill="#000"/><path d="M109.5,345.2 h5" stroke="#000" stroke-width="0.8"/><path d="M127,338 l2,-2 h12 v3 l-2,2 h-12z" fill="#e8e8e8" stroke="#666" stroke-width="0.9"/><path d="M128.5,341 h4 v10.5 h-4z M135,341 h4 v10.5 h-4z" fill="#cfcfcf" stroke="#666" stroke-width="0.9"/><path d="M130.5,341 v10 M137,341 v10" stroke="#999" stroke-width="0.8"/><path d="M88.5,357.5 v9 l5,-4.5z" fill="#000"/><path d="M106,362 q6,-8 12,0 q-6,8 -12,0z" fill="#fff" stroke="#000" stroke-width="1.1"/><path d="M109.7,363 a2.3,2.3 0 0 1 4.6,0z" fill="#000"/><path d="M109.5,363.2 h5" stroke="#000" stroke-width="0.8"/><path d="M128,356 l3,-2 l2,1.5 l3,-1.5 l2,2 l3,-1 v4 l1,3 l-1,3 l1,3 l-3,1 l-2,2 l-3,-1 l-3,1 l-2,-2 l-1,-3 l1,-3 l-1,-3z" fill="#bbb" stroke="#777" stroke-width="0.8" stroke-dasharray="1.5,0.8"/><circle cx="133.5" cy="362.5" r="3.2" fill="#999" stroke="#666" stroke-width="0.7"/><path d="M46,380 q6,-8 12,0 q-6,8 -12,0z" fill="#c6e2ff" stroke="#000" stroke-width="1.1"/><path d="M49.7,381 a2.3,2.3 0 0 1 4.6,0z" fill="#000"/><path d="M49.5,381.2 h5" stroke="#000" stroke-width="0.8"/><path d="M72,377 h-5 v10 h10 v-4" fill="none" stroke="#3f6a9c" stroke-width="1.8"/><circle cx="76.5" cy="378" r="5" fill="none" stroke="#3f6a9c" stroke-width="1.6" stroke-dasharray="1.6,0.8"/><path d="M73,380 h6 v3 h-6z" fill="none" stroke="#3f6a9c" stroke-width="1.3"/><rect x="188.5" y="123.5" width="9" height="9" fill="none" stroke="#777" stroke-width="1"/><path d="M188.5,126.5 h9" stroke="#777" stroke-width="1"/><rect x="208.5" y="126.5" width="6" height="6" fill="#fff" stroke="#777" stroke-width="1"/><path d="M211.5,126.5 v-3 h6 v6 h-3" fill="none" stroke="#777" stroke-width="1"/><path d="M231,124 l8,8 M239,124 l-8,8" stroke="#666" stroke-width="1.4"/><path d="M9.5,625.5 v9 l5,-4.5z" fill="#000"/></svg>
<svg class="a" style="left:0;top:0" width="420" height="50" viewBox="0 0 420 50"><path d="M37.1,27.8 L42.4,24.2 L52.2,25.6 L47.1,29.5z" fill="#35c4c6" stroke="#148a8c" stroke-width="1.4" stroke-linejoin="round"/><path d="M37.1,27.8 L47.1,29.5 L47.1,39 L37.4,37.3z M47.1,29.5 L52.2,25.6 L52,35.5 L47.1,39z" fill="#fff" stroke="#169a9c" stroke-width="1.6" stroke-linejoin="round"/><path d="M40.5,35.8 l1.5,-0.8 M43,30.8 v2" stroke="#111" stroke-width="1.2"/><circle cx="45.3" cy="34.2" r="0.9" fill="#333"/><path d="M111,26 h11 l-11,11z" fill="#000"/><path d="M124,28 v10.5 h-10.5z" fill="#c8c8c8" stroke="#888" stroke-width="0.6"/><path d="M268,34 q3,-3 6,-3 l3,-3 h6 l-4,5 q-2,2 -5,1 l-2,1.5 q-2,0.5 -4,-1.5z" fill="#35c4c6" stroke="#1b6e70" stroke-width="0.6"/><circle cx="349" cy="32" r="6" fill="none" stroke="#a01010" stroke-width="2.4"/><path d="M345,28 l8,8" stroke="#a01010" stroke-width="2.4"/></svg>
<svg class="a" style="left:0;top:0" width="1211" height="860" viewBox="0 0 1211 860"><defs><clipPath id="vc"><rect x="250" y="92" width="961" height="768"/></clipPath></defs><g clip-path="url(#vc)"><g stroke-width="1" shape-rendering="crispEdges"><line x1="1131.7" y1="92.0" x2="1211.0" y2="158.8" stroke="#c4c4c4"/><line x1="1032.4" y1="92.0" x2="1211.0" y2="242.4" stroke="#c4c4c4"/><line x1="933.1" y1="92.0" x2="1211.0" y2="326.0" stroke="#b2b2b2"/><line x1="833.8" y1="92.0" x2="1211.0" y2="409.6" stroke="#c4c4c4"/><line x1="734.6" y1="92.0" x2="1211.0" y2="493.2" stroke="#c4c4c4"/><line x1="635.3" y1="92.0" x2="1211.0" y2="576.8" stroke="#c4c4c4"/><line x1="536.0" y1="92.0" x2="1211.0" y2="660.4" stroke="#c4c4c4"/><line x1="436.7" y1="92.0" x2="1211.0" y2="744.0" stroke="#c4c4c4"/><line x1="337.4" y1="92.0" x2="1211.0" y2="827.6" stroke="#c4c4c4"/><line x1="250.0" y1="102.0" x2="1150.2" y2="860.0" stroke="#c4c4c4"/><line x1="250.0" y1="185.6" x2="1051.0" y2="860.0" stroke="#c4c4c4"/><line x1="250.0" y1="269.2" x2="951.7" y2="860.0" stroke="#c4c4c4"/><line x1="250.0" y1="436.4" x2="753.1" y2="860.0" stroke="#c4c4c4"/><line x1="250.0" y1="520.0" x2="653.8" y2="860.0" stroke="#c4c4c4"/><line x1="250.0" y1="603.6" x2="554.5" y2="860.0" stroke="#c4c4c4"/><line x1="250.0" y1="687.2" x2="455.2" y2="860.0" stroke="#c4c4c4"/><line x1="250.0" y1="770.8" x2="355.9" y2="860.0" stroke="#c4c4c4"/><line x1="250.0" y1="854.4" x2="256.7" y2="860.0" stroke="#c4c4c4"/><line x1="1087.5" y1="860.0" x2="1211.0" y2="815.5" stroke="#c4c4c4"/><line x1="935.6" y1="860.0" x2="1211.0" y2="760.8" stroke="#c4c4c4"/><line x1="783.6" y1="860.0" x2="1211.0" y2="706.1" stroke="#c4c4c4"/><line x1="631.7" y1="860.0" x2="1211.0" y2="651.4" stroke="#c4c4c4"/><line x1="479.7" y1="860.0" x2="1211.0" y2="596.7" stroke="#c4c4c4"/><line x1="327.8" y1="860.0" x2="1211.0" y2="542.0" stroke="#c4c4c4"/><line x1="250.0" y1="833.3" x2="1211.0" y2="487.3" stroke="#c4c4c4"/><line x1="250.0" y1="723.9" x2="1211.0" y2="377.9" stroke="#c4c4c4"/><line x1="250.0" y1="669.2" x2="1211.0" y2="323.2" stroke="#c4c4c4"/><line x1="250.0" y1="614.5" x2="1211.0" y2="268.5" stroke="#c4c4c4"/><line x1="250.0" y1="559.8" x2="1211.0" y2="213.8" stroke="#c4c4c4"/><line x1="250.0" y1="505.1" x2="1211.0" y2="159.1" stroke="#c4c4c4"/><line x1="250.0" y1="450.4" x2="1211.0" y2="104.4" stroke="#c4c4c4"/><line x1="250.0" y1="395.7" x2="1093.6" y2="92.0" stroke="#c4c4c4"/><line x1="250.0" y1="341.0" x2="941.7" y2="92.0" stroke="#c4c4c4"/><line x1="250.0" y1="286.3" x2="789.7" y2="92.0" stroke="#c4c4c4"/><line x1="250.0" y1="231.6" x2="637.8" y2="92.0" stroke="#b2b2b2"/><line x1="250.0" y1="176.9" x2="485.8" y2="92.0" stroke="#c4c4c4"/><line x1="250.0" y1="122.2" x2="333.9" y2="92.0" stroke="#c4c4c4"/></g><line x1="250.0" y1="352.3" x2="853.0" y2="860.0" stroke="#e0282a" stroke-width="1.2"/><line x1="250.0" y1="778.0" x2="1211.0" y2="432.0" stroke="#22d422" stroke-width="1.2"/><polygon points="604.5,289.5 831.4,481.0 831.4,855.8 604.5,664.6" fill="#666666" stroke="none" stroke-width="0" stroke-linejoin="miter"/><polygon points="831.4,481.0 1179.5,355.5 1179.5,730.8 831.4,855.8" fill="#999999" stroke="none" stroke-width="0" stroke-linejoin="miter"/><polygon points="604.5,289.5 952.0,164.4 1179.5,355.5 831.4,481.0" fill="#666666" stroke="none" stroke-width="0" stroke-linejoin="miter"/><polyline points="604.5,289.5 952.0,164.4 1179.5,355.5 831.4,481.0 604.5,289.5" fill="none" stroke="#000" stroke-width="2"/><polyline points="604.5,289.5 604.5,664.6 831.4,855.8 1179.5,730.8 1179.5,355.5" fill="none" stroke="#000" stroke-width="2"/><polyline points="831.4,481.0 831.4,855.8" fill="none" stroke="#000" stroke-width="2"/><polyline points="604.5,304.5 831.4,494.5 1179.5,370.0" fill="none" stroke="#000" stroke-width="2"/><polyline points="604.5,650.5 831.4,841.8 1179.5,717.2" fill="none" stroke="#000" stroke-width="2"/><polyline points="845.5,489.5 845.5,836.5" fill="none" stroke="#000" stroke-width="2"/><defs><clipPath id="sc"><polygon points="605.5,652 830.4,841.5 830.4,854.8 605.5,663.6"/></clipPath></defs><g clip-path="url(#sc)" stroke="#b4b4b4" stroke-width="1" shape-rendering="crispEdges"><line x1="250" y1="2966.0" x2="1211" y2="2620.0"/><line x1="250" y1="2911.3" x2="1211" y2="2565.3"/><line x1="250" y1="2856.6" x2="1211" y2="2510.6"/><line x1="250" y1="2801.9" x2="1211" y2="2455.9"/><line x1="250" y1="2747.2" x2="1211" y2="2401.2"/><line x1="250" y1="2692.5" x2="1211" y2="2346.5"/><line x1="250" y1="2637.8" x2="1211" y2="2291.8"/><line x1="250" y1="2583.1" x2="1211" y2="2237.1"/><line x1="250" y1="2528.4" x2="1211" y2="2182.4"/><line x1="250" y1="2473.7" x2="1211" y2="2127.7"/><line x1="250" y1="2419.0" x2="1211" y2="2073.0"/><line x1="250" y1="2364.3" x2="1211" y2="2018.3"/><line x1="250" y1="2309.6" x2="1211" y2="1963.6"/><line x1="250" y1="2254.9" x2="1211" y2="1908.9"/><line x1="250" y1="2200.2" x2="1211" y2="1854.2"/><line x1="250" y1="2145.5" x2="1211" y2="1799.5"/><line x1="250" y1="2090.8" x2="1211" y2="1744.8"/><line x1="250" y1="2036.1" x2="1211" y2="1690.1"/><line x1="250" y1="1981.4" x2="1211" y2="1635.4"/><line x1="250" y1="1926.7" x2="1211" y2="1580.7"/><line x1="250" y1="1872.0" x2="1211" y2="1526.0"/><line x1="250" y1="1817.3" x2="1211" y2="1471.3"/><line x1="250" y1="1762.6" x2="1211" y2="1416.6"/><line x1="250" y1="1707.9" x2="1211" y2="1361.9"/><line x1="250" y1="1653.2" x2="1211" y2="1307.2"/><line x1="250" y1="1598.5" x2="1211" y2="1252.5"/><line x1="250" y1="1543.8" x2="1211" y2="1197.8"/><line x1="250" y1="1489.1" x2="1211" y2="1143.1"/><line x1="250" y1="1434.4" x2="1211" y2="1088.4"/><line x1="250" y1="1379.7" x2="1211" y2="1033.7"/><line x1="250" y1="1325.0" x2="1211" y2="979.0"/><line x1="250" y1="1270.3" x2="1211" y2="924.3"/><line x1="250" y1="1215.6" x2="1211" y2="869.6"/><line x1="250" y1="1160.9" x2="1211" y2="814.9"/><line x1="250" y1="1106.2" x2="1211" y2="760.2"/><line x1="250" y1="1051.5" x2="1211" y2="705.5"/><line x1="250" y1="996.8" x2="1211" y2="650.8"/><line x1="250" y1="942.1" x2="1211" y2="596.1"/><line x1="250" y1="887.4" x2="1211" y2="541.4"/><line x1="250" y1="832.7" x2="1211" y2="486.7"/><line x1="250" y1="778.0" x2="1211" y2="432.0"/><line x1="250" y1="723.3" x2="1211" y2="377.3"/><line x1="250" y1="668.6" x2="1211" y2="322.6"/><line x1="250" y1="613.9" x2="1211" y2="267.9"/><line x1="250" y1="559.2" x2="1211" y2="213.2"/><line x1="250" y1="504.5" x2="1211" y2="158.5"/><line x1="250" y1="449.8" x2="1211" y2="103.8"/><line x1="250" y1="395.1" x2="1211" y2="49.1"/><line x1="250" y1="340.4" x2="1211" y2="-5.6"/><line x1="250" y1="285.7" x2="1211" y2="-60.3"/><line x1="250" y1="231.0" x2="1211" y2="-115.0"/><line x1="250" y1="176.3" x2="1211" y2="-169.7"/><line x1="250" y1="121.6" x2="1211" y2="-224.4"/><line x1="250" y1="66.9" x2="1211" y2="-279.1"/><line x1="250" y1="12.2" x2="1211" y2="-333.8"/><line x1="250" y1="-42.5" x2="1211" y2="-388.5"/><line x1="250" y1="-97.2" x2="1211" y2="-443.2"/><line x1="250" y1="-151.9" x2="1211" y2="-497.9"/><line x1="250" y1="-206.6" x2="1211" y2="-552.6"/><line x1="250" y1="-261.3" x2="1211" y2="-607.3"/><line x1="250" y1="-316.0" x2="1211" y2="-662.0"/><line x1="250" y1="-370.7" x2="1211" y2="-716.7"/><line x1="250" y1="-425.4" x2="1211" y2="-771.4"/><line x1="250" y1="-480.1" x2="1211" y2="-826.1"/><line x1="250" y1="-534.8" x2="1211" y2="-880.8"/><line x1="250" y1="-589.5" x2="1211" y2="-935.5"/><line x1="250" y1="-644.2" x2="1211" y2="-990.2"/><line x1="250" y1="-698.9" x2="1211" y2="-1044.9"/><line x1="250" y1="-753.6" x2="1211" y2="-1099.6"/><line x1="250" y1="-808.3" x2="1211" y2="-1154.3"/><line x1="250" y1="-863.0" x2="1211" y2="-1209.0"/><line x1="250" y1="-917.7" x2="1211" y2="-1263.7"/><line x1="250" y1="-972.4" x2="1211" y2="-1318.4"/><line x1="250" y1="-1027.1" x2="1211" y2="-1373.1"/><line x1="250" y1="-1081.8" x2="1211" y2="-1427.8"/><line x1="250" y1="-1136.5" x2="1211" y2="-1482.5"/><line x1="250" y1="-1191.2" x2="1211" y2="-1537.2"/><line x1="250" y1="-1245.9" x2="1211" y2="-1591.9"/><line x1="250" y1="-1300.6" x2="1211" y2="-1646.6"/><line x1="250" y1="-1355.3" x2="1211" y2="-1701.3"/><line x1="250" y1="-1410.0" x2="1211" y2="-1756.0"/></g><polygon points="683.8,491.8 751.6,548.9 751.6,653.5 683.6,596.3" fill="#555555" stroke="none" stroke-width="0" stroke-linejoin="miter"/><polygon points="699.0,511.0 749.3,553.2 749.3,609.3 728.4,615.8 698.6,591.2" fill="#999999" stroke="none" stroke-width="0" stroke-linejoin="miter"/><polygon points="728.4,615.8 749.3,609.3 749.3,633.0" fill="#686868" stroke="none" stroke-width="0" stroke-linejoin="miter"/><path d="M728.4,615.8 L749.3,609.3" stroke="#333" stroke-width="1"/><rect x="684" y="492.0" width="2.3999999999999773" height="104.2" fill="#444"/><rect x="686.4" y="494.9" width="3.2000000000000455" height="100.6" fill="#888"/><rect x="689.6" y="498.7" width="3.3999999999999773" height="95.8" fill="#777"/><rect x="693" y="502.8" width="2.5" height="90.8" fill="#444"/><rect x="695.5" y="505.7" width="2.0" height="87.0" fill="#aaa"/><rect x="697.5" y="508.1" width="1.5" height="84.1" fill="#3a3a3a"/><rect x="749.3" y="550" width="2.3" height="100" fill="#444"/><path d="M683.8,491.8 L751.6,548.9 L751.6,653.5 L683.6,596.3 Z" fill="none" stroke="#000" stroke-width="1.4"/><path d="M686.4,497 L749.3,549.9 L749.3,646.5 M686.4,497 V594" fill="none" stroke="#000" stroke-width="1.2"/><path d="M689.6,501.5 L749.3,551.8 M689.6,501.5 V593" fill="none" stroke="#000" stroke-width="1"/><path d="M686,594 L749.3,646.5 M689.6,592.5 L749.3,642 M693,592 L749.3,638.6 M697.5,591.5 L749.3,634.5" fill="none" stroke="#111" stroke-width="1"/><path d="M693,505 V592 M697.5,509 V591.5" fill="none" stroke="#2a2a2a" stroke-width="1"/><polygon points="399.8,723.5 535.0,675.5 623.0,749.7 487.4,797.7" fill="#99ccff" stroke="none" stroke-width="0" stroke-linejoin="miter"/><defs><clipPath id="rc"><polygon points="399.8,723.5 535,675.5 623,749.7 487.4,797.7"/></clipPath></defs><g clip-path="url(#rc)" stroke="#c9c6b4" stroke-width="1" stroke-dasharray="1.5,2"><line x1="250" y1="-2991.7" x2="1211" y2="-2182.5"/><line x1="250" y1="2966.0" x2="1211" y2="2620.0"/><line x1="250" y1="-2908.1" x2="1211" y2="-2098.9"/><line x1="250" y1="2911.3" x2="1211" y2="2565.3"/><line x1="250" y1="-2824.5" x2="1211" y2="-2015.3"/><line x1="250" y1="2856.6" x2="1211" y2="2510.6"/><line x1="250" y1="-2740.9" x2="1211" y2="-1931.7"/><line x1="250" y1="2801.9" x2="1211" y2="2455.9"/><line x1="250" y1="-2657.3" x2="1211" y2="-1848.1"/><line x1="250" y1="2747.2" x2="1211" y2="2401.2"/><line x1="250" y1="-2573.7" x2="1211" y2="-1764.5"/><line x1="250" y1="2692.5" x2="1211" y2="2346.5"/><line x1="250" y1="-2490.1" x2="1211" y2="-1680.9"/><line x1="250" y1="2637.8" x2="1211" y2="2291.8"/><line x1="250" y1="-2406.5" x2="1211" y2="-1597.3"/><line x1="250" y1="2583.1" x2="1211" y2="2237.1"/><line x1="250" y1="-2322.9" x2="1211" y2="-1513.7"/><line x1="250" y1="2528.4" x2="1211" y2="2182.4"/><line x1="250" y1="-2239.3" x2="1211" y2="-1430.1"/><line x1="250" y1="2473.7" x2="1211" y2="2127.7"/><line x1="250" y1="-2155.7" x2="1211" y2="-1346.5"/><line x1="250" y1="2419.0" x2="1211" y2="2073.0"/><line x1="250" y1="-2072.1" x2="1211" y2="-1262.9"/><line x1="250" y1="2364.3" x2="1211" y2="2018.3"/><line x1="250" y1="-1988.5" x2="1211" y2="-1179.3"/><line x1="250" y1="2309.6" x2="1211" y2="1963.6"/><line x1="250" y1="-1904.9" x2="1211" y2="-1095.7"/><line x1="250" y1="2254.9" x2="1211" y2="1908.9"/><line x1="250" y1="-1821.3" x2="1211" y2="-1012.1"/><line x1="250" y1="2200.2" x2="1211" y2="1854.2"/><line x1="250" y1="-1737.7" x2="1211" y2="-928.5"/><line x1="250" y1="2145.5" x2="1211" y2="1799.5"/><line x1="250" y1="-1654.1" x2="1211" y2="-844.9"/><line x1="250" y1="2090.8" x2="1211" y2="1744.8"/><line x1="250" y1="-1570.5" x2="1211" y2="-761.3"/><line x1="250" y1="2036.1" x2="1211" y2="1690.1"/><line x1="250" y1="-1486.9" x2="1211" y2="-677.7"/><line x1="250" y1="1981.4" x2="1211" y2="1635.4"/><line x1="250" y1="-1403.3" x2="1211" y2="-594.1"/><line x1="250" y1="1926.7" x2="1211" y2="1580.7"/><line x1="250" y1="-1319.7" x2="1211" y2="-510.5"/><line x1="250" y1="1872.0" x2="1211" y2="1526.0"/><line x1="250" y1="-1236.1" x2="1211" y2="-426.9"/><line x1="250" y1="1817.3" x2="1211" y2="1471.3"/><line x1="250" y1="-1152.5" x2="1211" y2="-343.3"/><line x1="250" y1="1762.6" x2="1211" y2="1416.6"/><line x1="250" y1="-1068.9" x2="1211" y2="-259.7"/><line x1="250" y1="1707.9" x2="1211" y2="1361.9"/><line x1="250" y1="-985.3" x2="1211" y2="-176.1"/><line x1="250" y1="1653.2" x2="1211" y2="1307.2"/><line x1="250" y1="-901.7" x2="1211" y2="-92.5"/><line x1="250" y1="1598.5" x2="1211" y2="1252.5"/><line x1="250" y1="-818.1" x2="1211" y2="-8.9"/><line x1="250" y1="1543.8" x2="1211" y2="1197.8"/><line x1="250" y1="-734.5" x2="1211" y2="74.7"/><line x1="250" y1="1489.1" x2="1211" y2="1143.1"/><line x1="250" y1="-650.9" x2="1211" y2="158.3"/><line x1="250" y1="1434.4" x2="1211" y2="1088.4"/><line x1="250" y1="-567.3" x2="1211" y2="241.9"/><line x1="250" y1="1379.7" x2="1211" y2="1033.7"/><line x1="250" y1="-483.7" x2="1211" y2="325.5"/><line x1="250" y1="1325.0" x2="1211" y2="979.0"/><line x1="250" y1="-400.1" x2="1211" y2="409.1"/><line x1="250" y1="1270.3" x2="1211" y2="924.3"/><line x1="250" y1="-316.5" x2="1211" y2="492.7"/><line x1="250" y1="1215.6" x2="1211" y2="869.6"/><line x1="250" y1="-232.9" x2="1211" y2="576.3"/><line x1="250" y1="1160.9" x2="1211" y2="814.9"/><line x1="250" y1="-149.3" x2="1211" y2="659.9"/><line x1="250" y1="1106.2" x2="1211" y2="760.2"/><line x1="250" y1="-65.7" x2="1211" y2="743.5"/><line x1="250" y1="1051.5" x2="1211" y2="705.5"/><line x1="250" y1="17.9" x2="1211" y2="827.1"/><line x1="250" y1="996.8" x2="1211" y2="650.8"/><line x1="250" y1="101.5" x2="1211" y2="910.7"/><line x1="250" y1="942.1" x2="1211" y2="596.1"/><line x1="250" y1="185.1" x2="1211" y2="994.3"/><line x1="250" y1="887.4" x2="1211" y2="541.4"/><line x1="250" y1="268.7" x2="1211" y2="1077.9"/><line x1="250" y1="832.7" x2="1211" y2="486.7"/><line x1="250" y1="352.3" x2="1211" y2="1161.5"/><line x1="250" y1="778.0" x2="1211" y2="432.0"/><line x1="250" y1="435.9" x2="1211" y2="1245.1"/><line x1="250" y1="723.3" x2="1211" y2="377.3"/><line x1="250" y1="519.5" x2="1211" y2="1328.7"/><line x1="250" y1="668.6" x2="1211" y2="322.6"/><line x1="250" y1="603.1" x2="1211" y2="1412.3"/><line x1="250" y1="613.9" x2="1211" y2="267.9"/><line x1="250" y1="686.7" x2="1211" y2="1495.9"/><line x1="250" y1="559.2" x2="1211" y2="213.2"/><line x1="250" y1="770.3" x2="1211" y2="1579.5"/><line x1="250" y1="504.5" x2="1211" y2="158.5"/><line x1="250" y1="853.9" x2="1211" y2="1663.1"/><line x1="250" y1="449.8" x2="1211" y2="103.8"/><line x1="250" y1="937.5" x2="1211" y2="1746.7"/><line x1="250" y1="395.1" x2="1211" y2="49.1"/><line x1="250" y1="1021.1" x2="1211" y2="1830.3"/><line x1="250" y1="340.4" x2="1211" y2="-5.6"/><line x1="250" y1="1104.7" x2="1211" y2="1913.9"/><line x1="250" y1="285.7" x2="1211" y2="-60.3"/><line x1="250" y1="1188.3" x2="1211" y2="1997.5"/><line x1="250" y1="231.0" x2="1211" y2="-115.0"/><line x1="250" y1="1271.9" x2="1211" y2="2081.1"/><line x1="250" y1="176.3" x2="1211" y2="-169.7"/><line x1="250" y1="1355.5" x2="1211" y2="2164.7"/><line x1="250" y1="121.6" x2="1211" y2="-224.4"/><line x1="250" y1="1439.1" x2="1211" y2="2248.3"/><line x1="250" y1="66.9" x2="1211" y2="-279.1"/><line x1="250" y1="1522.7" x2="1211" y2="2331.9"/><line x1="250" y1="12.2" x2="1211" y2="-333.8"/><line x1="250" y1="1606.3" x2="1211" y2="2415.5"/><line x1="250" y1="-42.5" x2="1211" y2="-388.5"/><line x1="250" y1="1689.9" x2="1211" y2="2499.1"/><line x1="250" y1="-97.2" x2="1211" y2="-443.2"/><line x1="250" y1="1773.5" x2="1211" y2="2582.7"/><line x1="250" y1="-151.9" x2="1211" y2="-497.9"/><line x1="250" y1="1857.1" x2="1211" y2="2666.3"/><line x1="250" y1="-206.6" x2="1211" y2="-552.6"/><line x1="250" y1="1940.7" x2="1211" y2="2749.9"/><line x1="250" y1="-261.3" x2="1211" y2="-607.3"/><line x1="250" y1="2024.3" x2="1211" y2="2833.5"/><line x1="250" y1="-316.0" x2="1211" y2="-662.0"/><line x1="250" y1="2107.9" x2="1211" y2="2917.1"/><line x1="250" y1="-370.7" x2="1211" y2="-716.7"/><line x1="250" y1="2191.5" x2="1211" y2="3000.7"/><line x1="250" y1="-425.4" x2="1211" y2="-771.4"/><line x1="250" y1="2275.1" x2="1211" y2="3084.3"/><line x1="250" y1="-480.1" x2="1211" y2="-826.1"/><line x1="250" y1="2358.7" x2="1211" y2="3167.9"/><line x1="250" y1="-534.8" x2="1211" y2="-880.8"/><line x1="250" y1="2442.3" x2="1211" y2="3251.5"/><line x1="250" y1="-589.5" x2="1211" y2="-935.5"/><line x1="250" y1="2525.9" x2="1211" y2="3335.1"/><line x1="250" y1="-644.2" x2="1211" y2="-990.2"/><line x1="250" y1="2609.5" x2="1211" y2="3418.7"/><line x1="250" y1="-698.9" x2="1211" y2="-1044.9"/><line x1="250" y1="2693.1" x2="1211" y2="3502.3"/><line x1="250" y1="-753.6" x2="1211" y2="-1099.6"/><line x1="250" y1="2776.7" x2="1211" y2="3585.9"/><line x1="250" y1="-808.3" x2="1211" y2="-1154.3"/><line x1="250" y1="2860.3" x2="1211" y2="3669.5"/><line x1="250" y1="-863.0" x2="1211" y2="-1209.0"/><line x1="250" y1="2943.9" x2="1211" y2="3753.1"/><line x1="250" y1="-917.7" x2="1211" y2="-1263.7"/><line x1="250" y1="3027.5" x2="1211" y2="3836.7"/><line x1="250" y1="-972.4" x2="1211" y2="-1318.4"/><line x1="250" y1="3111.1" x2="1211" y2="3920.3"/><line x1="250" y1="-1027.1" x2="1211" y2="-1373.1"/><line x1="250" y1="3194.7" x2="1211" y2="4003.9"/><line x1="250" y1="-1081.8" x2="1211" y2="-1427.8"/><line x1="250" y1="3278.3" x2="1211" y2="4087.5"/><line x1="250" y1="-1136.5" x2="1211" y2="-1482.5"/><line x1="250" y1="3361.9" x2="1211" y2="4171.1"/><line x1="250" y1="-1191.2" x2="1211" y2="-1537.2"/><line x1="250" y1="3445.5" x2="1211" y2="4254.7"/><line x1="250" y1="-1245.9" x2="1211" y2="-1591.9"/><line x1="250" y1="3529.1" x2="1211" y2="4338.3"/><line x1="250" y1="-1300.6" x2="1211" y2="-1646.6"/><line x1="250" y1="3612.7" x2="1211" y2="4421.9"/><line x1="250" y1="-1355.3" x2="1211" y2="-1701.3"/><line x1="250" y1="3696.3" x2="1211" y2="4505.5"/><line x1="250" y1="-1410.0" x2="1211" y2="-1756.0"/></g><path d="M487.4,797.7 L399.8,723.5 L535,675.5" fill="none" stroke="#000" stroke-width="2" stroke-linejoin="miter"/><path d="M487.4,797.7 L623,749.7" fill="none" stroke="#000" stroke-width="2"/><path d="M535,675.5 L623,749.7" fill="none" stroke="#555" stroke-width="1.8"/><path d="M399.8,723.5 L470,698.6" stroke="#22d422" stroke-width="0.8" stroke-dasharray="2,2"/><rect x="338" y="625" width="295" height="188" fill="none" stroke="#ff0000" stroke-width="4"/></g><rect x="0" y="370" width="196" height="30.5" fill="none" stroke="#ff0000" stroke-width="4"/><rect x="0" y="761.5" width="244.4" height="39.8" fill="none" stroke="#ff0000" stroke-width="4"/></svg></body></html>
